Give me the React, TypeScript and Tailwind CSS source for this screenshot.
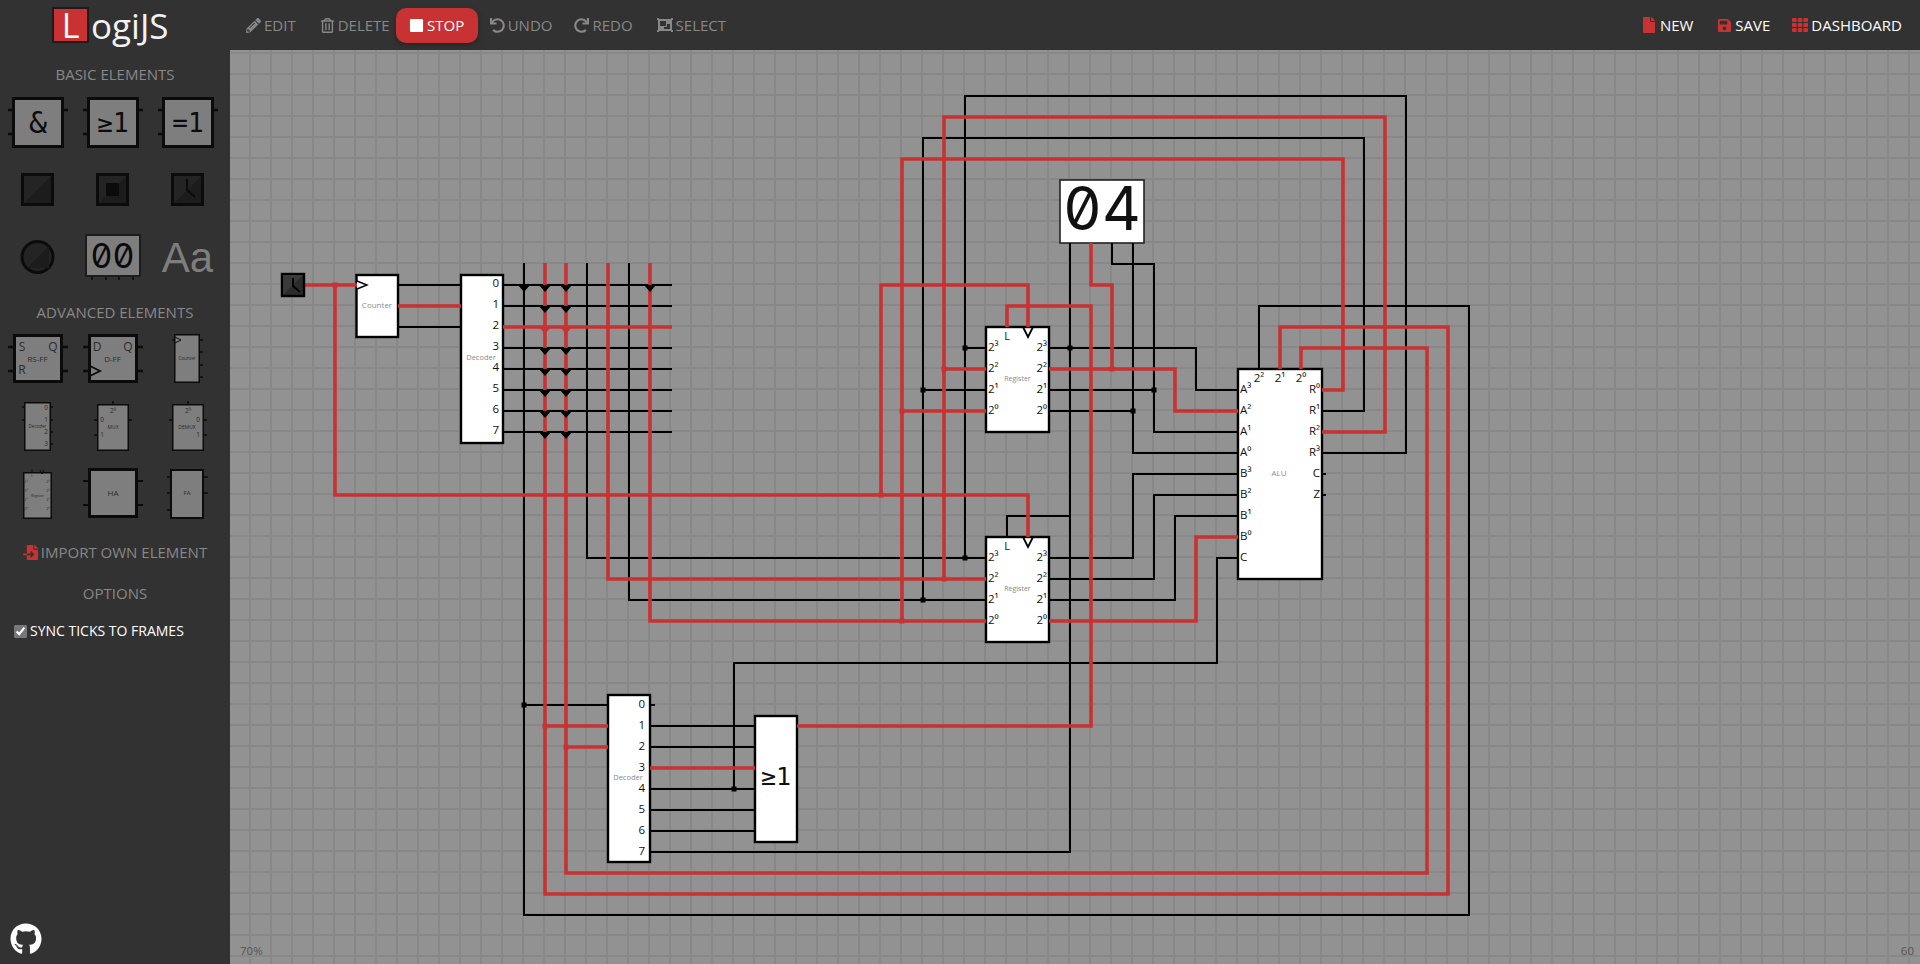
import React from "react";
import { FaPencilAlt, FaRegTrashAlt, FaStop, FaUndo, FaRedo, FaObjectGroup, FaFile, FaSave, FaTh, FaGithub, FaFileImport } from "react-icons/fa";

const RED = "#c83232";
const MONO = "'DejaVu Sans Mono', monospace";
const SLASHED = "font-['Inter',sans-serif] font-normal [font-feature-settings:'zero','tnum']";

const blackWires: number[][] = [
  [524, 263, 524, 915, 1469, 915, 1469, 306, 1259, 306, 1259, 369],
  [587, 263, 587, 558, 986, 558],
  [629, 263, 629, 600, 986, 600],
  [965, 558, 965, 96, 1406, 96, 1406, 453, 1322, 453],
  [923, 600, 923, 138, 1364, 138, 1364, 411, 1322, 411],
  [965, 348, 986, 348],
  [923, 390, 986, 390],
  [1070, 243, 1070, 852, 650, 852],
  [1007, 537, 1007, 516, 1070, 516],
  [1112, 243, 1112, 264, 1154, 264, 1154, 432, 1238, 432],
  [1133, 243, 1133, 453, 1238, 453],
  [1049, 348, 1196, 348, 1196, 390, 1238, 390],
  [1049, 390, 1154, 390],
  [1049, 411, 1133, 411],
  [1049, 558, 1133, 558, 1133, 474, 1238, 474],
  [1049, 579, 1154, 579, 1154, 495, 1238, 495],
  [1049, 600, 1175, 600, 1175, 516, 1238, 516],
  [1238, 558, 1217, 558, 1217, 663, 734, 663, 734, 789],
  [398, 285, 461, 285],
  [398, 327, 461, 327],
  [503, 285, 672, 285],
  [503, 306, 672, 306],
  [503, 348, 672, 348],
  [503, 369, 672, 369],
  [503, 390, 672, 390],
  [503, 411, 672, 411],
  [503, 432, 672, 432],
  [524, 705, 608, 705],
  [650, 705, 655, 705],
  [650, 726, 755, 726],
  [650, 747, 755, 747],
  [650, 789, 755, 789],
  [650, 810, 755, 810],
  [650, 831, 755, 831],
  [1322, 474, 1326, 474],
  [1322, 495, 1326, 495],
];

const redWires: number[][] = [
  [305, 285, 357, 285],
  [335, 285, 335, 495, 1028, 495, 1028, 537],
  [881, 495, 881, 285, 1028, 285, 1028, 327],
  [398, 306, 461, 306],
  [503, 327, 672, 327],
  [545, 263, 545, 894, 1448, 894, 1448, 327, 1280, 327, 1280, 369],
  [566, 263, 566, 873, 1427, 873, 1427, 348, 1301, 348, 1301, 369],
  [608, 263, 608, 579, 986, 579],
  [650, 263, 650, 621, 986, 621],
  [944, 579, 944, 117, 1385, 117, 1385, 432, 1322, 432],
  [902, 621, 902, 159, 1343, 159, 1343, 390, 1322, 390],
  [944, 369, 986, 369],
  [902, 411, 986, 411],
  [1091, 243, 1091, 285, 1112, 285, 1112, 369],
  [1007, 327, 1007, 306, 1091, 306, 1091, 726, 797, 726],
  [1049, 369, 1175, 369, 1175, 411, 1238, 411],
  [1049, 621, 1196, 621, 1196, 537, 1238, 537],
  [650, 768, 755, 768],
  [545, 726, 608, 726],
  [566, 747, 608, 747],
];

const blackDots = [[965, 348], [923, 390], [1070, 348], [1154, 390], [1133, 411], [965, 558], [923, 600], [524, 705], [734, 789]];
const redDots = [[335, 285], [944, 369], [902, 411], [1112, 369], [944, 579], [902, 621], [545, 726], [566, 747], [881, 495]];

const diodes: [number, number, string][] = [
  [524, 285, "#000"],
  [650, 285, "#000"],
  ...[285, 306, 327, 348, 369, 390, 411, 432].flatMap((y) => [545, 566].map((x) => [x, y, y === 327 ? RED : "#000"] as [number, number, string])),
];

function Wire({ p, c, w }: { p: number[]; c: string; w: number }) {
  return <polyline points={p.join(",")} fill="none" stroke={c} strokeWidth={w} strokeLinejoin="miter" />;
}

function Box({ x1, y1, x2, y2 }: { x1: number; y1: number; x2: number; y2: number }) {
  return <rect x={x1} y={y1} width={x2 - x1} height={y2 - y1} fill="#fff" stroke="#000" strokeWidth={2.4} />;
}

function Lbl({ x, y, t, a = "start", s = 11.5, c = "#111" }: { x: number; y: number; t: string; a?: "start" | "middle" | "end"; s?: number; c?: string }) {
  return (
    <text x={x} y={y} fontSize={s} fill={c} textAnchor={a} dominantBaseline="central">
      {t}
    </text>
  );
}

function RegisterLabels({ top }: { top: number }) {
  const rows = ["2³", "2²", "2¹", "2⁰"];
  return (
    <g>
      <Lbl x={1007} y={top + 8} t="L" a="middle" s={11} />
      <polyline points={`1023,${top} 1028,${top + 10} 1033,${top}`} fill="none" stroke="#000" strokeWidth={1.8} />
      {rows.map((t, i) => (
        <g key={t}>
          <Lbl x={988} y={top + 19 + i * 21} t={t} />
          <Lbl x={1047} y={top + 19 + i * 21} t={t} a="end" />
        </g>
      ))}
      <Lbl x={1017.5} y={top + 51} t="Register" a="middle" s={7} c="#8a8a8a" />
    </g>
  );
}

function DecoderLabels({ top, right }: { top: number; right: number }) {
  return (
    <g>
      {[0, 1, 2, 3, 4, 5, 6, 7].map((n) => (
        <Lbl key={n} x={right} y={top + n * 21} t={String(n)} a="end" s={11.5} />
      ))}
    </g>
  );
}

function Circuit() {
  return (
    <svg viewBox="230 50 1690 914" className="absolute inset-0 h-full w-full font-['Open_Sans',sans-serif]">
      <Box x1={356.5} y1={275} x2={398} y2={337} />
      <Box x1={461} y1={275} x2={503} y2={443} />
      <Box x1={608} y1={695} x2={650} y2={862} />
      <Box x1={755} y1={716} x2={797} y2={842} />
      <Box x1={986} y1={327} x2={1049} y2={432} />
      <Box x1={986} y1={537} x2={1049} y2={642} />
      <Box x1={1238} y1={369} x2={1322} y2={579} />
      <rect x={1060} y={180} width={84} height={63} fill="#fff" stroke="#222" strokeWidth={1.6} />

      {blackWires.map((p, i) => (
        <Wire key={i} p={p} c="#000" w={2} />
      ))}
      {redWires.map((p, i) => (
        <Wire key={i} p={p} c={RED} w={3.6} />
      ))}
      {diodes.map(([x, y, c]) => (
        <polygon key={`${x}-${y}`} points={`${x - 6},${y} ${x + 6},${y} ${x},${y + 7}`} fill={c} />
      ))}
      {blackDots.map(([x, y]) => (
        <rect key={`${x}-${y}`} x={x - 2.5} y={y - 2.5} width={5} height={5} fill="#000" />
      ))}
      {redDots.map(([x, y]) => (
        <rect key={`${x}-${y}`} x={x - 2.5} y={y - 2.5} width={5} height={5} fill={RED} />
      ))}

      <rect x={282} y={274} width={22} height={22} fill="#2b2b2b" stroke="#000" strokeWidth={2.4} />
      <polygon points="283,295 303,275 283,275" fill="#3a3a3a" />
      <polyline points="293,278 293,286 300,292" fill="none" stroke="#000" strokeWidth={1.8} />

      <polyline points="357,281 367,285 357,289" fill="#fff" stroke="#000" strokeWidth={1.4} />
      <Lbl x={377} y={304} t="Counter" a="middle" s={8} c="#8a8a8a" />
      <DecoderLabels top={282} right={499} />
      <Lbl x={481} y={357} t="Decoder" a="middle" s={7.5} c="#8a8a8a" />

      <DecoderLabels top={703} right={645} />
      <Lbl x={628} y={777} t="Decoder" a="middle" s={7.5} c="#8a8a8a" />

      <text x={776} y={776} fontSize={25} fill="#111" textAnchor="middle" dominantBaseline="central" fontFamily={MONO}>
        ≥1
      </text>
      <text x={1102} y={208} fontSize={60} fill="#111" textAnchor="middle" dominantBaseline="central" className={SLASHED}>
        04
      </text>

      <RegisterLabels top={327} />
      <RegisterLabels top={537} />

      {["A³", "A²", "A¹", "A⁰", "B³", "B²", "B¹", "B⁰", "C"].map((t, i) => (
        <Lbl key={t} x={1240} y={388 + i * 21} t={t} />
      ))}
      {["R⁰", "R¹", "R²", "R³", "C", "Z"].map((t, i) => (
        <Lbl key={t} x={1320} y={388 + i * 21} t={t} a="end" />
      ))}
      <Lbl x={1259} y={377} t="2²" a="middle" />
      <Lbl x={1280} y={377} t="2¹" a="middle" />
      <Lbl x={1301} y={377} t="2⁰" a="middle" />
      <Lbl x={1279} y={472} t="ALU" a="middle" s={8} c="#8a8a8a" />
    </svg>
  );
}

const cellX = [1, 76, 151];
function Cell({ col, top, children }: { col: number; top: number; children: React.ReactNode }) {
  return (
    <svg viewBox={`${cellX[col]} ${top} 75 67`} className="h-[67px] w-[75px] font-['Open_Sans',sans-serif]">
      {children}
    </svg>
  );
}

const G = "#7e7e7e";
const K = "#0b0b0b";

function Pin({ x1, y1, x2, y2, w = 2 }: { x1: number; y1: number; x2: number; y2: number; w?: number }) {
  return <line x1={x1} y1={y1} x2={x2} y2={y2} stroke={K} strokeWidth={w} />;
}

function Gate({ x, t, s = 26 }: { x: number; t: string; s?: number }) {
  return (
    <g>
      <Pin x1={x - 4} y1={110} x2={x} y2={110} w={2.5} />
      <Pin x1={x - 4} y1={134} x2={x} y2={134} w={2.5} />
      <Pin x1={x + 52} y1={110} x2={x + 56} y2={110} w={2.5} />
      <rect x={x + 1.5} y={98.5} width={49} height={48} fill={G} stroke={K} strokeWidth={3} />
      <text x={x + 26} y={122.5} fontSize={s} fill={K} textAnchor="middle" dominantBaseline="central" fontFamily={MONO}>
        {t}
      </text>
    </g>
  );
}

function Pad({ x, children }: { x: number; children?: React.ReactNode }) {
  return (
    <g>
      <rect x={x + 1.5} y={174.5} width={30} height={30} fill="#242424" stroke={K} strokeWidth={3} />
      <polygon points={`${x + 3},203 ${x + 30},203 ${x + 30},176`} fill="#1c1c1c" />
      {children}
    </g>
  );
}

function Small({ x, y, t, a = "middle", s = 9, c = "#2b2b2b" }: { x: number; y: number; t: string; a?: "start" | "middle" | "end"; s?: number; c?: string }) {
  return (
    <text x={x} y={y} fontSize={s} fill={c} textAnchor={a} dominantBaseline="central">
      {t}
    </text>
  );
}

function AdvBox({ x1, y1, x2, y2, w = 2 }: { x1: number; y1: number; x2: number; y2: number; w?: number }) {
  return <rect x={x1 + w / 2} y={y1 + w / 2} width={x2 - x1 - w} height={y2 - y1 - w} fill={G} stroke={K} strokeWidth={w} />;
}

function Header({ t, className = "" }: { t: string; className?: string }) {
  return <div className={`h-[22px] text-center text-[15px] leading-[22px] text-[#888] ${className}`}>{t}</div>;
}

function Sidebar() {
  return (
    <aside className="flex w-[230px] shrink-0 flex-col bg-[#323232]">
      <Header t="BASIC ELEMENTS" className="mt-[13px]" />
      <div className="mt-[4px] grid grid-cols-[75px_75px_75px] pl-[1px]">
        <Cell col={0} top={89}><Gate x={12} t="&" s={30} /></Cell>
        <Cell col={1} top={89}><Gate x={87} t="≥1" /></Cell>
        <Cell col={2} top={89}><Gate x={162} t="=1" /></Cell>
        <Cell col={0} top={156}><Pad x={21} /></Cell>
        <Cell col={1} top={156}>
          <Pad x={96}>
            <rect x={106} y={183} width={13} height={13} fill={K} />
          </Pad>
        </Cell>
        <Cell col={2} top={156}>
          <Pad x={171}>
            <polyline points="187,179 187,190 195,197" fill="none" stroke={K} strokeWidth={2} />
          </Pad>
        </Cell>
        <Cell col={0} top={223}>
          <circle cx={37.5} cy={257} r={15.5} fill="#242424" stroke={K} strokeWidth={3} />
          <polygon points="27,268 49,268 49,246" fill="#1c1c1c" />
        </Cell>
        <Cell col={1} top={223}>
          {[92, 106, 119, 133].map((x) => (
            <Pin key={x} x1={x} y1={277} x2={x} y2={280} w={1.5} />
          ))}
          <rect x={86} y={235} width={54} height={41} fill={G} stroke="#1c1c1c" strokeWidth={2} />
          <text x={112.5} y={255} fontSize={34} fill={K} textAnchor="middle" dominantBaseline="central" className={SLASHED}>
            00
          </text>
        </Cell>
        <Cell col={2} top={223}>
          <text x={187.5} y={272} fontSize={42} fill={G} textAnchor="middle" fontFamily="'Liberation Sans', sans-serif">
            Aa
          </text>
        </Cell>
      </div>

      <Header t="ADVANCED ELEMENTS" className="mt-[11px]" />
      <div className="mt-[3px] grid grid-cols-[75px_75px_75px] pl-[1px]">
        <Cell col={0} top={326}>
          <Pin x1={8} y1={347} x2={13} y2={347} w={2.5} />
          <Pin x1={8} y1={371} x2={13} y2={371} w={2.5} />
          <Pin x1={63} y1={347} x2={68} y2={347} w={2.5} />
          <Pin x1={63} y1={371} x2={68} y2={371} w={2.5} />
          <AdvBox x1={13} y1={334} x2={63} y2={383} w={3} />
          <Small x={22} y={346} t="S" s={12} />
          <Small x={53} y={346} t="Q" s={12} />
          <Small x={22} y={369} t="R" s={12} />
          <Small x={37.5} y={358} t="RS-FF" s={8} />
        </Cell>
        <Cell col={1} top={326}>
          <Pin x1={83} y1={347} x2={88} y2={347} w={2.5} />
          <Pin x1={83} y1={371} x2={88} y2={371} w={2.5} />
          <Pin x1={138} y1={347} x2={143} y2={347} w={2.5} />
          <Pin x1={138} y1={371} x2={143} y2={371} w={2.5} />
          <AdvBox x1={88} y1={334} x2={138} y2={383} w={3} />
          <Small x={97} y={346} t="D" s={12} />
          <Small x={128} y={346} t="Q" s={12} />
          <polyline points="90,366 100,371 90,376" fill="none" stroke={K} strokeWidth={1.8} />
          <Small x={112.5} y={358} t="D-FF" s={8} />
        </Cell>
        <Cell col={2} top={326}>
          {[340, 352, 365, 377].map((y) => (
            <Pin key={y} x1={200} y1={y} x2={203} y2={y} w={1.5} />
          ))}
          <Pin x1={172} y1={340} x2={175} y2={340} w={1.5} />
          <AdvBox x1={174} y1={334} x2={200} y2={383} w={1.5} />
          <polyline points="175,337 181,340 175,343" fill="none" stroke={K} strokeWidth={1} />
          <Small x={187} y={358} t="Counter" s={4.5} />
        </Cell>

        <Cell col={0} top={393}>
          <Pin x1={22} y1={407} x2={25} y2={407} w={1.5} />
          <Pin x1={22} y1={420} x2={25} y2={420} w={1.5} />
          <Pin x1={50} y1={407} x2={53} y2={407} w={1.5} />
          <Pin x1={50} y1={420} x2={53} y2={420} w={1.5} />
          <Pin x1={50} y1={432} x2={53} y2={432} w={1.5} />
          <Pin x1={50} y1={444} x2={53} y2={444} w={1.5} />
          <AdvBox x1={24} y1={402} x2={51} y2={451} w={1.5} />
          {["0", "1", "2", "3"].map((t, i) => (
            <Small key={t} x={46} y={407 + i * 12.2} t={t} s={6.5} />
          ))}
          <Small x={37.5} y={426} t="Decoder" s={4.5} />
        </Cell>
        <Cell col={1} top={393}>
          <Pin x1={113} y1={401} x2={113} y2={405} w={1.5} />
          <Pin x1={94} y1={420} x2={98} y2={420} w={1.5} />
          <Pin x1={94} y1={435} x2={98} y2={435} w={1.5} />
          <Pin x1={128} y1={420} x2={132} y2={420} w={1.5} />
          <AdvBox x1={97} y1={404} x2={129} y2={451} w={1.5} />
          <Small x={113} y={410} t="2⁰" s={6.5} />
          <Small x={102} y={419} t="0" s={6.5} />
          <Small x={102} y={434} t="1" s={6.5} />
          <Small x={113} y={427} t="MUX" s={5} />
        </Cell>
        <Cell col={2} top={393}>
          <Pin x1={188} y1={401} x2={188} y2={405} w={1.5} />
          <Pin x1={169} y1={420} x2={173} y2={420} w={1.5} />
          <Pin x1={203} y1={420} x2={207} y2={420} w={1.5} />
          <Pin x1={203} y1={435} x2={207} y2={435} w={1.5} />
          <AdvBox x1={172} y1={404} x2={204} y2={451} w={1.5} />
          <Small x={188} y={410} t="2⁰" s={6.5} />
          <Small x={198} y={419} t="0" s={6.5} />
          <Small x={198} y={434} t="1" s={6.5} />
          <Small x={187} y={427} t="DEMUX" s={5} />
        </Cell>

        <Cell col={0} top={460}>
          <AdvBox x1={23} y1={472} x2={52} y2={519} w={1.5} />
          <Pin x1={32} y1={469} x2={32} y2={472} w={1} />
          <polyline points="40,470 42,474 44,470" fill="none" stroke={K} strokeWidth={1} />
          <Small x={32} y={475} t="L" s={3.5} />
          {["2³", "2²", "2¹", "2⁰"].map((t, i) => (
            <g key={t}>
              <Small x={26} y={481 + i * 9.3} t={t} s={4} />
              <Small x={48} y={481 + i * 9.3} t={t} s={4} />
            </g>
          ))}
          <Small x={37.5} y={495} t="Register" s={3.5} />
        </Cell>
        <Cell col={1} top={460}>
          <Pin x1={83} y1={481} x2={88} y2={481} w={2} />
          <Pin x1={83} y1={505} x2={88} y2={505} w={2} />
          <Pin x1={138} y1={481} x2={143} y2={481} w={2} />
          <Pin x1={138} y1={505} x2={143} y2={505} w={2} />
          <AdvBox x1={88} y1={468} x2={138} y2={518} w={3} />
          <Small x={113} y={492} t="HA" s={8} />
        </Cell>
        <Cell col={2} top={460}>
          {[477, 493, 510].map((y) => (
            <Pin key={y} x1={167} y1={y} x2={170} y2={y} w={1.5} />
          ))}
          {[477, 493].map((y) => (
            <Pin key={y} x1={204} y1={y} x2={208} y2={y} w={1.5} />
          ))}
          <AdvBox x1={170} y1={469} x2={204} y2={519} w={2} />
          <Small x={187} y={493} t="FA" s={6} />
        </Cell>
      </div>

      <div className="mt-[14px] flex h-[22px] items-center justify-center text-[15px] leading-[22px] text-[#888]">
        <FaFileImport className="mr-[3px] text-[15px] text-[#c83232]" />
        IMPORT OWN ELEMENT
      </div>
      <Header t="OPTIONS" className="mt-[19px]" />
      <label className="mt-[16px] flex h-[22px] items-center pl-[14px] text-[14px] leading-[22px] text-white">
        <input type="checkbox" defaultChecked readOnly className="mr-[3px] h-[13px] w-[13px] accent-[#777]" />
        SYNC TICKS TO FRAMES
      </label>
      <div className="mt-auto pb-[9px] pl-[10px]">
        <FaGithub className="text-[32px] text-white" />
      </div>
    </aside>
  );
}

function ToolBtn({ icon, label, className = "" }: { icon: React.ReactNode; label: string; className?: string }) {
  return (
    <button className={`flex h-[35px] items-center gap-[3px] text-[15px] text-[#888] ${className}`}>
      {icon}
      {label}
    </button>
  );
}

function RightBtn({ icon, label, className = "" }: { icon: React.ReactNode; label: string; className?: string }) {
  return (
    <button className={`flex items-center gap-[3px] text-[15px] text-white ${className}`}>
      <span className="text-[#c83232]">{icon}</span>
      {label}
    </button>
  );
}

function TopBar() {
  return (
    <header className="flex h-[50px] shrink-0 items-center bg-[#323232]">
      <div className="flex w-[230px] shrink-0 items-center pl-[52px]">
        <div className="flex h-[36px] w-[37px] items-center justify-center border-2 border-[#1c1c1c] bg-[#c83232] text-[34px] leading-none text-white">L</div>
        <span className="ml-[2px] mt-[1px] text-[35px] leading-none text-[#f2f2f2]">ogiJS</span>
      </div>
      <ToolBtn className="ml-[16px]" icon={<FaPencilAlt className="text-[15px]" />} label="EDIT" />
      <ToolBtn className="ml-[24px]" icon={<FaRegTrashAlt className="text-[15px]" />} label="DELETE" />
      <button className="ml-[6px] flex h-[35px] w-[82px] items-center justify-center gap-[3px] rounded-[10px] bg-[#c83232] text-[15px] text-white shadow-[0_2px_6px_rgba(0,0,0,0.25)]">
        <FaStop className="text-[15px]" />
        STOP
      </button>
      <ToolBtn className="ml-[12px]" icon={<FaUndo className="text-[15px]" />} label="UNDO" />
      <ToolBtn className="ml-[22px]" icon={<FaRedo className="text-[15px]" />} label="REDO" />
      <ToolBtn className="ml-[24px]" icon={<FaObjectGroup className="text-[16px]" />} label="SELECT" />
      <div className="ml-auto flex items-center pr-[18px]">
        <RightBtn icon={<FaFile className="text-[16px]" />} label="NEW" />
        <RightBtn className="ml-[24px]" icon={<FaSave className="text-[15px]" />} label="SAVE" />
        <RightBtn className="ml-[22px]" icon={<FaTh className="text-[16px]" />} label="DASHBOARD" />
      </div>
    </header>
  );
}

export default function App() {
  return (
    <div className="flex h-screen w-screen flex-col overflow-hidden bg-[#323232] font-['Open_Sans',sans-serif]">
      <TopBar />
      <div className="flex min-h-0 flex-1">
        <Sidebar />
        <main className="relative flex-1 overflow-hidden bg-[#929292] bg-[linear-gradient(to_right,transparent_19px,#888_19px,#888_21px),linear-gradient(to_bottom,#888_2px,transparent_2px)] bg-[size:21px_21px] bg-[position:0_2px]">
          <Circuit />
          <span className="absolute bottom-[8px] left-[10px] text-[11.5px] leading-none text-[#555]">70%</span>
          <span className="absolute bottom-[8px] right-[6px] text-[11.5px] leading-none text-[#555]">60</span>
        </main>
      </div>
    </div>
  );
}
